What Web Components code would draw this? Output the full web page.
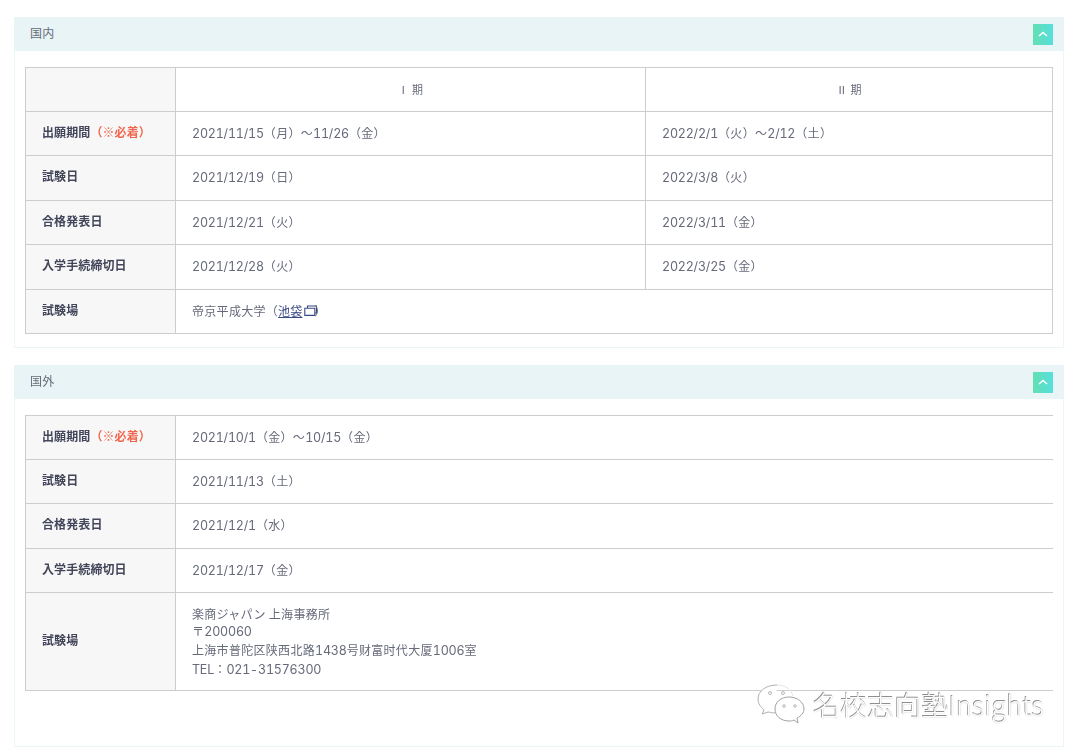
<!DOCTYPE html>
<html lang="ja"><head><meta charset="utf-8">
<style>
html,body{margin:0;padding:0;background:#fff}
body{width:1080px;height:756px;overflow:hidden;position:relative;font-family:"Noto Sans CJK JP","Noto Sans",sans-serif;color:#5c6072}
main{display:flex;flex-direction:column;gap:17px;padding:17px 16px 0 14px;filter:blur(.35px)}
</style></head>
<body>
<main>
<exam-panel title-text="国内" style="height:331px"><exam-table id="t1"></exam-table></exam-panel>
<exam-panel title-text="国外" style="height:382px"><exam-table id="t2" open-right></exam-table></exam-panel>
</main>
<wm-mark></wm-mark>
<script>
class ExamPanel extends HTMLElement{
  constructor(){super();const s=this.attachShadow({mode:'open'});
  s.innerHTML=`<style>
  :host{display:flex;flex-direction:column;box-sizing:border-box;width:1050px;border:1px solid #eaf6f8;border-top:0}
  .h{display:flex;align-items:center;justify-content:space-between;height:34px;margin:0 -1px;padding:0 11px 0 16px;background:#e8f4f6;font-size:12px;color:#666b78;letter-spacing:.2px;flex:none}
  .h>span:first-child{padding-bottom:3px}
  .b{width:20px;height:21px;background:linear-gradient(90deg,#63dfb3,#56dfdc);display:flex;align-items:center;justify-content:center}
  .c{padding:16px 10px 0}
  </style><div class="h"><span>${this.getAttribute('title-text')}</span><span class="b"><svg width="12" height="8" viewBox="0 0 12 8"><path d="M2 6 L6 2.4 L10 6" fill="none" stroke="#fff" stroke-width="1.5"/></svg></span></div><div class="c"><slot></slot></div>`;}
}
customElements.define('exam-panel',ExamPanel);

const wrap=t=>t.replace(/(^|>)([^<]*)/g,(m,a,b)=>a+b.replace(/[0-9A-Za-z\/\-]+/g,x=>`<span class="n">${x}</span>`));
class ExamTable extends HTMLElement{
  set data(d){
    const open=this.hasAttribute('open-right');
    const rows=d.rows.map(r=>`<tr style="height:${r.h}px"><th>${r.l}${r.req?'<em>（※必着）</em>':''}</th>${r.c.map(c=>`<td ${c.span?`colspan="${c.span}"`:''} ${c.cls?`class="${c.cls}"`:''}>${c.raw?c.t:wrap(c.t)}</td>`).join('')}</tr>`).join('');
    this.shadowRoot.innerHTML=`<style>
    :host{display:block}
    table{border-collapse:collapse;table-layout:fixed;width:1027px;font-size:12px;color:#666a7a;line-height:18px;font-family:"Noto Sans CJK JP",sans-serif;letter-spacing:.3px}
    th,td{border:1px solid #cdcdcd;padding:0 16px 1px;text-align:left;font-weight:400;box-sizing:border-box}
    th{padding-bottom:4px}
    ${open?'td:last-child{border-right:0}':''}
    th{background:#f7f7f7;color:#43465a;font-weight:700;letter-spacing:.1px}
    th em{font-style:normal;color:#f0674f}
    .n{font-family:Inter,sans-serif;font-size:12.5px;font-feature-settings:"tnum";letter-spacing:-.2px}
    td.ctr{text-align:center;font-size:11px;padding-bottom:2px}
    td.multi{line-height:17.7px;padding-bottom:0}
    a{color:#3a4a86;text-decoration:underline;display:inline-flex;align-items:center;letter-spacing:.1px}
    svg{margin:0 -3px 0 2px}
    </style><table><colgroup><col style="width:150px">${d.cols.map(w=>`<col style="width:${w}px">`).join('')}</colgroup>${rows}</table>`;
  }
  constructor(){super();this.attachShadow({mode:'open'});}
}
customElements.define('exam-table',ExamTable);

class WmMark extends HTMLElement{
  constructor(){super();const s=this.attachShadow({mode:'open'});
  s.innerHTML=`<style>
  :host{position:absolute;left:756px;top:683px;display:flex;align-items:center;gap:7px}
  span{font:27px/40px "Noto Sans CJK SC","Noto Sans",sans-serif;color:#fdfdfd;letter-spacing:.1px;text-shadow:-.7px -.7px 0 #8f8f8f,0 0 1px #b0b0b0;font-weight:300;white-space:nowrap;position:relative;top:1px}
  </style><svg width="50" height="42" viewBox="0 0 50 42">
  <path d="M21 2C10 2 2 8 2 16c0 5 3 8 6 11l-2 4 6-2c1 0 4 1 7 1" fill="#fff" stroke="#b0b0b0" stroke-width="1"/>
  <path d="M21 2c8 0 14 4 16 11" fill="none" stroke="#e4e4e4" stroke-width="1"/>
  <path d="M33 14c-8 0-14 5-14 12s6 12 14 12c2 0 3 0 5-1l4 3-1-5c4-2 7-5 7-9 0-7-7-12-15-12z" fill="#fff" stroke="#a0a0a0" stroke-width="1"/>
  <circle cx="14" cy="10" r="1.5" fill="#fff" stroke="#999" stroke-width=".7"/><circle cx="27" cy="10" r="1.5" fill="#fff" stroke="#999" stroke-width=".7"/>
  <circle cx="28" cy="23" r="1.3" fill="#fff" stroke="#999" stroke-width=".7"/><circle cx="39" cy="23" r="1.3" fill="#fff" stroke="#999" stroke-width=".7"/>
  </svg><span>名校志向塾Insights</span>`;}
}
customElements.define('wm-mark',WmMark);

const icon='<svg width="13" height="12" viewBox="0 0 13 12"><path d="M3.5 3V1h9V8H11M.8 3.2h10V10.4H.8z" fill="none" stroke="#3a4a86" stroke-width="1.1"/></svg>';
document.getElementById('t1').data={cols:[470,407],rows:[
 {h:44,l:'',c:[{t:'Ⅰ 期',cls:'ctr'},{t:'Ⅱ 期',cls:'ctr'}]},
 {h:44,l:'出願期間',req:1,c:[{t:'2021/11/15（月）～11/26（金）'},{t:'2022/2/1（火）～2/12（土）'}]},
 {h:45,l:'試験日',c:[{t:'2021/12/19（日）'},{t:'2022/3/8（火）'}]},
 {h:44,l:'合格発表日',c:[{t:'2021/12/21（火）'},{t:'2022/3/11（金）'}]},
 {h:45,l:'入学手続締切日',c:[{t:'2021/12/28（火）'},{t:'2022/3/25（金）'}]},
 {h:44,l:'試験場',c:[{span:2,raw:1,t:`帝京平成大学（<a href="#">池袋${icon}</a>）`}]}
]};
document.getElementById('t2').data={cols:[877],rows:[
 {h:44,l:'出願期間',req:1,c:[{t:'2021/10/1（金）～10/15（金）'}]},
 {h:44,l:'試験日',c:[{t:'2021/11/13（土）'}]},
 {h:45,l:'合格発表日',c:[{t:'2021/12/1（水）'}]},
 {h:44,l:'入学手続締切日',c:[{t:'2021/12/17（金）'}]},
 {h:98,l:'試験場',c:[{cls:'multi',t:'楽商ジャパン 上海事務所<br>〒200060<br>上海市普陀区陕西北路1438号财富时代大厦1006室<br>TEL：021-31576300'}]}
]};
</script>
</body></html>
